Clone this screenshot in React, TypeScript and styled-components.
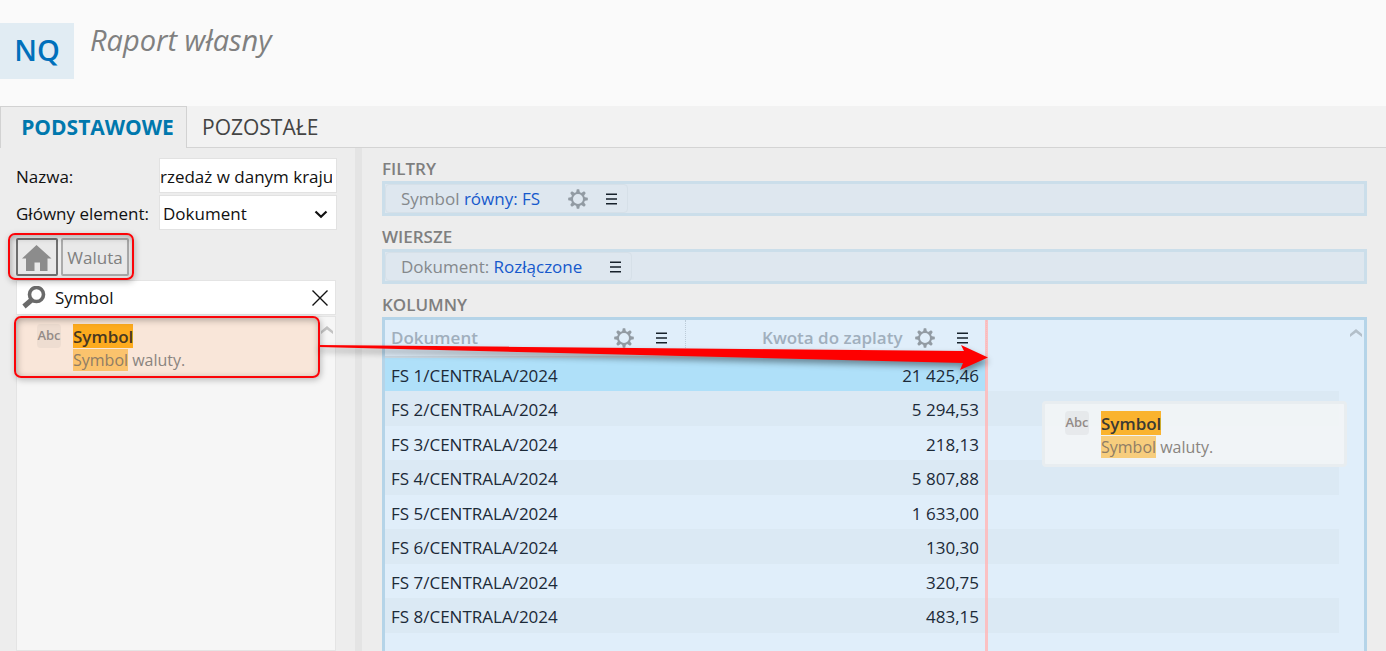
import React from 'react';
import styled, { createGlobalStyle, css } from 'styled-components';

const GlobalStyle = createGlobalStyle`
  *, *::before, *::after { box-sizing: border-box; }
  body {
    margin: 0;
    background: #ededed;
    color: #111;
    font: 17px/24px "Open Sans", "Noto Sans", sans-serif;
  }
  button, input, select { font: inherit; color: inherit; }
`;

const Page = styled.div`
  position: relative;
  display: flex;
  flex-direction: column;
  min-height: 100vh;
  overflow: hidden;
`;

const Header = styled.header`
  display: flex;
  align-items: flex-start;
  gap: 16px;
  height: 106px;
  padding-top: 23px;
  background: #fafafa;
`;

const Logo = styled.div`
  display: flex;
  justify-content: center;
  width: 74px;
  height: 56px;
  background: #e1ecf3;
  color: #0070bb;
  font-size: 29px;
  line-height: 54px;
  font-weight: 600;
`;

const Title = styled.h1`
  margin: 0;
  color: #808080;
  font-size: 29px;
  line-height: 33px;
  font-style: italic;
  font-weight: 400;
`;

const Tabs = styled.nav`
  display: flex;
  height: 42px;
  background: #f2f2f2;
  box-shadow: inset 0 -1px #d4d4d4;
`;

const Tab = styled.button<{ $active?: boolean }>`
  padding: 0 15px;
  border: 0;
  background: none;
  color: #444;
  font-size: 21px;
  ${(p) =>
    p.$active &&
    css`
      width: 187px;
      padding: 0 0 1px 8px;
      border: 1px solid #d2d2d2;
      border-bottom: 0;
      background: #ededed;
      color: #0078ad;
      font-weight: 700;
    `}
`;

const Body = styled.main`
  flex: 1;
  display: flex;
`;

const Sidebar = styled.aside`
  display: flex;
  flex-direction: column;
  width: 362px;
  flex: none;
  padding: 10px 18px 0 16px;
  border-right: 7px solid #e4e4e4;
`;

const Form = styled.form`
  display: grid;
  grid-template-columns: 143px 178px;
  row-gap: 2px;
  align-items: center;
`;

const Label = styled.label`
  padding-top: 2px;
  white-space: nowrap;
`;

const fieldBox = css`
  width: 100%;
  height: 35px;
  border: 1px solid #e2e2e2;
  border-radius: 0;
  background: #fff;
  outline: 0;
`;

const TextInput = styled.input`
  ${fieldBox}
  padding: 2px 4px 0 0;
  text-align: right;
`;

const SelectWrap = styled.div`
  position: relative;
  svg {
    position: absolute;
    right: 9px;
    top: 15px;
    pointer-events: none;
  }
`;

const Select = styled.select`
  ${fieldBox}
  padding: 2px 24px 0 3px;
  appearance: none;
`;

const Crumbs = styled.div`
  position: relative;
  display: flex;
  gap: 3px;
  align-self: flex-start;
  margin: 8px 0 4px;
`;

const Crumb = styled.button<{ $home?: boolean }>`
  display: flex;
  align-items: center;
  justify-content: center;
  width: ${(p) => (p.$home ? 42 : 68)}px;
  height: 38px;
  padding: 2px 0 0;
  border: 2px solid ${(p) => (p.$home ? '#707070' : '#ababab')};
  border-radius: 2px;
  background: #e9e9e9;
  color: #808080;
`;

const Callout = styled.span<{ $inset: string }>`
  position: absolute;
  inset: ${(p) => p.$inset};
  border: 2px solid #fb0408;
  border-radius: 7px;
  box-shadow: 1px 2px 6px rgba(0, 0, 0, 0.25), inset 1px 2px 7px rgba(0, 0, 0, 0.3);
  pointer-events: none;
`;

const SearchBox = styled.div`
  display: flex;
  align-items: center;
  width: 320px;
  height: 35px;
  padding: 0 7px 0 5px;
  border: 1px solid #e4e4e4;
  background: #fff;
`;

const SearchInput = styled.input`
  flex: 1;
  min-width: 0;
  padding: 0 0 0 9px;
  border: 0;
  outline: 0;
  background: none;
`;

const IconButton = styled.button`
  display: flex;
  padding: 0;
  border: 0;
  background: none;
`;

const Results = styled.div`
  display: flex;
  align-items: flex-start;
  flex: 1;
  width: 320px;
  margin-top: 1px;
  border: 1px solid #e4e4e4;
  background: #f6f6f6;
`;

const ResultSlot = styled.div`
  position: relative;
  flex: 1;
  background: #f9e6d9;
`;

const ScrollUp = styled(IconButton)`
  padding: 8px 1px 0;
`;

const Element = styled.div`
  display: flex;
  gap: 12px;
  height: 60px;
  padding: 7px 0 0 20px;
`;

const TypeBadge = styled.span`
  width: 24px;
  height: 24px;
  border-radius: 4px;
  background: rgba(120, 120, 120, 0.08);
  color: #948b87;
  font: 600 13px/22px "Open Sans", sans-serif;
  text-align: center;
`;

const ElementText = styled.div`
  display: flex;
  flex-direction: column;
  align-items: flex-start;
`;

const Name = styled.strong`
  height: 24px;
  background: #fdab1e;
  color: #473722;
  font-weight: 600;
  line-height: 26px;
`;

const Description = styled.span`
  color: #898480;
  font-size: 16px;
  line-height: 24px;
  mark {
    background: #fbc36d;
    color: #8f7d66;
  }
`;

const Content = styled.section`
  flex: 1;
  display: flex;
  flex-direction: column;
  min-width: 0;
  padding: 9px 19px 0 20px;
`;

const SectionTitle = styled.h2`
  margin: 0;
  color: #7f7f7f;
  font-size: 17px;
  line-height: 24px;
  font-weight: 600;
`;

const DropZone = styled.div`
  height: 35px;
  margin-bottom: 9px;
  border: 3px solid #cbdeea;
  background: #dee7ef;
`;

const Chip = styled.div`
  display: inline-flex;
  align-items: center;
  height: 29px;
  padding: 1px 10px 0 15px;
  border: 1px solid #d6e0e8;
  border-radius: 4px;
  color: #85898c;
  white-space: pre;
  a {
    color: #1659cc;
    text-decoration: none;
  }
  button:first-of-type { margin-left: 28px; }
  button + button { margin-left: 18px; }
`;

const GridPanel = styled.div`
  position: relative;
  flex: 1;
  display: flex;
  align-items: flex-start;
  border: 3px solid #b5d4e8;
  border-bottom: 0;
  background: #e0eefa;
`;

const Table = styled.table`
  flex: 1;
  table-layout: fixed;
  border-collapse: collapse;
  color: #1c2a38;
`;

const HeadCell = styled.th<{ $width?: number }>`
  width: ${(p) => (p.$width ? `${p.$width}px` : 'auto')};
  height: 37px;
  padding: 0 6px;
  border-right: ${(p) => (p.$width ? '1px dotted #bccbd8' : '0')};
  border-bottom: ${(p) => (p.$width ? '2px solid #ccd9e3' : '0')};
  color: #a0afbd;
  font-weight: 600;
`;

const HeadContent = styled.div<{ $end?: boolean }>`
  display: flex;
  align-items: center;
  justify-content: ${(p) => (p.$end ? 'flex-end' : 'space-between')};
  gap: 12px;
  padding-right: 12px;
`;

const Tools = styled.div`
  display: flex;
  align-items: center;
  gap: 22px;
`;

const Row = styled.tr<{ $selected?: boolean }>`
  height: 34px;
  &:nth-child(even) {
    height: 35px;
    background: #dbe9f4;
  }
  ${(p) =>
    p.$selected &&
    css`
      td:not(:last-child) { background: #afe0f9; }
    `}
`;

const Cell = styled.td<{ $end?: boolean }>`
  padding: 3px 7px 0 6px;
  text-align: ${(p) => (p.$end ? 'right' : 'left')};
`;

const GridScroll = styled(IconButton)`
  justify-content: center;
  width: 25px;
  padding: 8px 0 0 9px;
`;

const InsertMarker = styled.span`
  position: absolute;
  left: 600px;
  top: 0;
  bottom: 0;
  width: 3px;
  background: rgba(255, 184, 184, 0.85);
`;

const DragGhost = styled.div`
  position: absolute;
  left: 1042px;
  top: 401px;
  width: 305px;
  border: 3px solid #e8edf0;
  border-radius: 4px;
  background: rgba(243, 245, 246, 0.88);
  ${Name} { background: #fab32f; color: #3b3a33; }
  ${Description} mark { background: #f7cd7d; }
`;

const Arrow = styled.svg`
  position: absolute;
  left: 318px;
  top: 330px;
  filter: drop-shadow(1px 4px 3px rgba(0, 0, 0, 0.4));
  pointer-events: none;
`;

const teeth = [0, 45, 90, 135, 180, 225, 270, 315];

const Gear = () => (
  <svg width="20" height="20" viewBox="0 0 20 20" fill="none" stroke="#929ba3">
    <circle cx="10" cy="10" r="6" strokeWidth="2" />
    {teeth.map((a) => (
      <path key={a} d="M8 4 8.800.2h2.400L12 4z" fill="#929ba3" stroke="none" transform={`rotate(${a} 10 10)`} />
    ))}
  </svg>
);

const Menu = () => (
  <svg width="11" height="12" viewBox="0 0 11 12" stroke="#16212a" strokeWidth="1.500">
    <path d="M0 1.200h11M0 6h11M0 10.800h11" />
  </svg>
);

const ChevronUp = ({ color }: { color: string }) => (
  <svg width="14" height="10" viewBox="0 0 14 10" fill={color}>
    <path d="M7 1 13 6v3L7 4.5 1 9V6z" />
  </svg>
);

const GearButton = () => (
  <IconButton type="button" aria-label="Ustawienia"><Gear /></IconButton>
);
const MenuButton = () => (
  <IconButton type="button" aria-label="Menu"><Menu /></IconButton>
);

const CurrencySymbol = () => (
  <Element>
    <TypeBadge>Abc</TypeBadge>
    <ElementText>
      <Name>Symbol</Name>
      <Description><mark>Symbol</mark> waluty.</Description>
    </ElementText>
  </Element>
);

const amounts = ['21 425,46', '5 294,53', '218,13', '5 807,88', '1 633,00', '130,30', '320,75', '483,15'];

export default function App() {
  return (
    <>
      <GlobalStyle />
      <Page>
        <Header>
          <Logo>NQ</Logo>
          <Title>Raport własny</Title>
        </Header>
        <Tabs>
          <Tab type="button" $active>PODSTAWOWE</Tab>
          <Tab type="button">POZOSTAŁE</Tab>
        </Tabs>
        <Body>
          <Sidebar>
            <Form>
              <Label htmlFor="name">Nazwa:</Label>
              <TextInput id="name" defaultValue="rzedaż w danym kraju" />
              <Label htmlFor="root-element">Główny element:</Label>
              <SelectWrap>
                <Select id="root-element"><option>Dokument</option></Select>
                <svg width="14" height="9" viewBox="0 0 14 9" fill="none" stroke="#111" strokeWidth="2.2">
                  <path d="M1.5 1.5 7 6.8l5.500-5.300" />
                </svg>
              </SelectWrap>
            </Form>
            <Crumbs>
              <Crumb type="button" $home aria-label="Start">
                <svg width="30" height="26" viewBox="0 0 30 26" fill="#8c8c8c">
                  <path d="M14.500 0 29.500 13.500h-4V26H18v-8.500h-5.500V26H4V13.500H0z" />
                </svg>
              </Crumb>
              <Crumb type="button">Waluta</Crumb>
              <Callout $inset="-5px -5px -4px -8px" />
            </Crumbs>
            <SearchBox>
              <svg width="24" height="24" viewBox="0 0 24 24" fill="none" stroke="#6a6a6a">
                <circle cx="14.500" cy="8.500" r="7" strokeWidth="3.600" />
                <path d="M9.500 14 2 20.500" strokeWidth="5" />
              </svg>
              <SearchInput aria-label="Szukaj" defaultValue="Symbol" />
              <IconButton type="button" aria-label="Wyczyść">
                <svg width="16" height="16" viewBox="0 0 16 16" stroke="#111" strokeWidth="1.400">
                  <path d="M.5.5l15 15M15.500.5l-15 15" />
                </svg>
              </IconButton>
            </SearchBox>
            <Results>
              <ResultSlot>
                <CurrencySymbol />
                <Callout $inset="-1px -1px -1px -3px" />
              </ResultSlot>
              <ScrollUp type="button" aria-label="W górę"><ChevronUp color="#c3c3c3" /></ScrollUp>
            </Results>
          </Sidebar>
          <Content>
            <SectionTitle>FILTRY</SectionTitle>
            <DropZone>
              <Chip>Symbol <a href="#filter">równy: FS</a><GearButton /><MenuButton /></Chip>
            </DropZone>
            <SectionTitle>WIERSZE</SectionTitle>
            <DropZone>
              <Chip>Dokument: <a href="#rows">Rozłączone</a><MenuButton /></Chip>
            </DropZone>
            <SectionTitle>KOLUMNY</SectionTitle>
            <GridPanel>
              <Table>
                <thead>
                  <tr>
                    <HeadCell $width={300}>
                      <HeadContent>Dokument<Tools><GearButton /><MenuButton /></Tools></HeadContent>
                    </HeadCell>
                    <HeadCell $width={301}>
                      <HeadContent $end>Kwota do zaplaty<Tools><GearButton /><MenuButton /></Tools></HeadContent>
                    </HeadCell>
                    <HeadCell />
                  </tr>
                </thead>
                <tbody>
                  {amounts.map((amount, i) => (
                    <Row key={amount} $selected={i === 0}>
                      <Cell>{`FS ${i + 1}/CENTRALA/2024`}</Cell>
                      <Cell $end>{amount}</Cell>
                      <Cell />
                    </Row>
                  ))}
                </tbody>
              </Table>
              <GridScroll type="button" aria-label="Przewiń w górę"><ChevronUp color="#b3bfc9" /></GridScroll>
              <InsertMarker />
            </GridPanel>
          </Content>
        </Body>
        <DragGhost><CurrencySymbol /></DragGhost>
        <Arrow width="672" height="44" viewBox="0 0 672 44" fill="#fe0000">
          <path d="M0 15 646 21 643 15 670 27.500 642 40 645 33 0 17z" />
        </Arrow>
      </Page>
    </>
  );
}
